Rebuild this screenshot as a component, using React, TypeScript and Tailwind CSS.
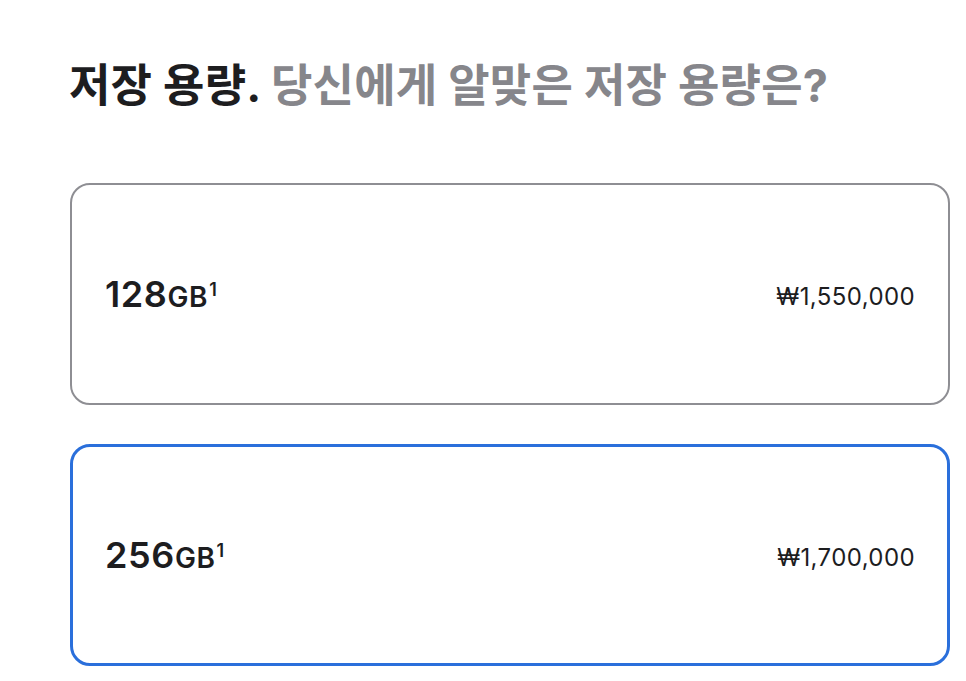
const options = [
  { size: '128', price: '₩1,550,000', selected: false },
  { size: '256', price: '₩1,700,000', selected: true },
];

const font = "font-['Inter','Noto_Sans_CJK_KR',sans-serif]";

export default function App() {
  return (
    <div className={`min-h-screen bg-white pl-[69px] pr-[16px] pt-[58px] ${font}`}>
      <h2 className="text-[45px] font-bold leading-[56px] tracking-[0.2px] text-[#1d1d1f]">
        저장 용량. <span className="text-[#86868b]">당신에게 알맞은 저장 용량은?</span>
      </h2>
      <div className="ml-[1px] mt-[69px] flex w-[880px] flex-col gap-[39px]">
        {options.map((o) => (
          <div
            key={o.size}
            className={
              o.selected
                ? 'flex h-[222px] items-center justify-between rounded-[20px] border-[3px] border-[#2a6fdb] px-[32px]'
                : 'flex h-[222px] items-center justify-between rounded-[20px] border-2 border-[#8e8e93] px-[33px]'
            }
          >
            <div className="flex items-baseline tracking-[0.6px] text-[#1d1d1f]">
              <span className="text-[36px] font-semibold">{o.size}</span>
              <span className="text-[28px] font-semibold">GB</span>
              <span className="self-start pl-[1px] pt-[9px] text-[18px] font-semibold">1</span>
            </div>
            <span className="pt-[6px] text-[24px] tracking-[0.4px] text-[#1d1d1f]">{o.price}</span>
          </div>
        ))}
      </div>
    </div>
  );
}
